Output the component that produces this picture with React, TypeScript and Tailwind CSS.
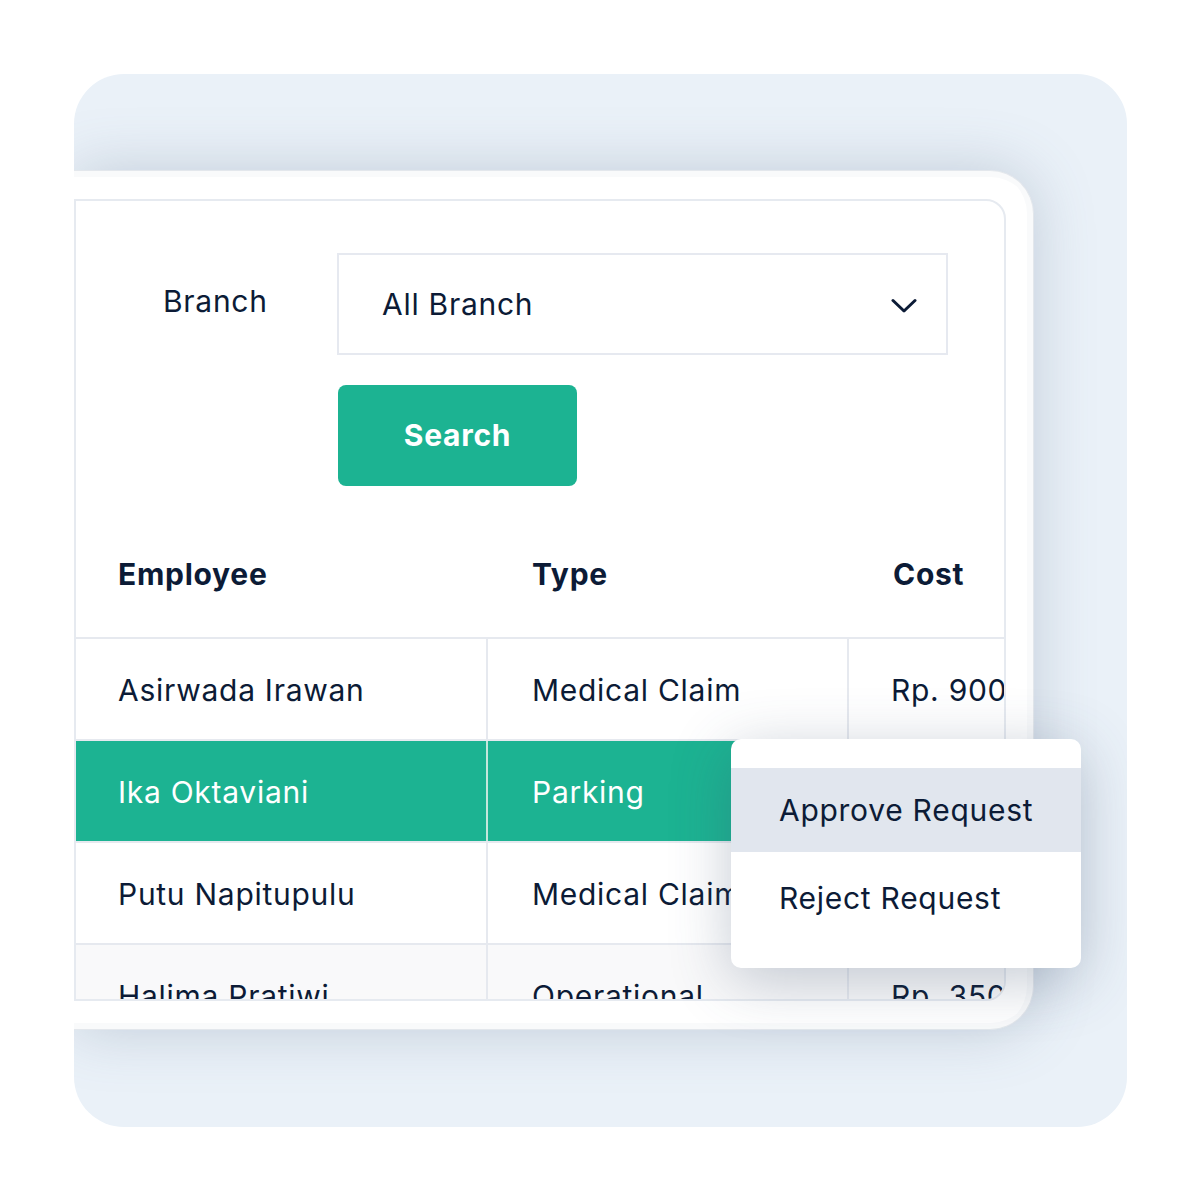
import React from "react";

const rows = [
  { name: "Asirwada Irawan", type: "Medical Claim", cost: "Rp. 900.000", kind: "white" },
  { name: "Ika Oktaviani", type: "Parking", cost: "Rp. 50.000", kind: "green" },
  { name: "Putu Napitupulu", type: "Medical Claim", cost: "Rp. 700.000", kind: "white" },
  { name: "Halima Pratiwi", type: "Operational", cost: "Rp. 350.000", kind: "grey" },
];

export default function App() {
  return (
    <div className="w-[1201px] h-[1201px] bg-white p-[74px] font-['Inter','Noto_Sans',sans-serif] text-[#0c1b36] tracking-[0.045em]">
      <div className="relative w-[1053px] h-[1053px] rounded-[50px] bg-[#eaf1f8] overflow-hidden pt-[96px]">
        <div className="w-[960px] h-[860px] bg-white rounded-r-[44px] border border-l-0 border-[#e3e7ec] shadow-[0_0_60px_rgba(90,110,140,0.28),inset_0_6px_0_#f9fafb,inset_-6px_0_0_#f9fafb,inset_0_-6px_0_#f9fafb] pt-[28px] pb-[28px] pr-[27px]">
          <div className="w-full h-full border-2 border-[#e6eaf0] rounded-r-[20px] overflow-hidden flex flex-col bg-white">
            <div className="shrink-0 flex items-center pl-[87px] pt-[52px]">
              <div className="w-[174px] text-[30px] leading-none mb-[6px]">Branch</div>
              <div className="w-[611px] h-[102px] border-2 border-[#e6e9f0] flex items-center justify-between pl-[43px] pr-[29px]">
                <span className="text-[30px] leading-none">All Branch</span>
                <svg width="26" height="16" viewBox="0 0 26 16" className="mt-[3px]">
                  <polyline points="2,2.5 13,13 24,2.5" fill="none" stroke="#0c1b36" strokeWidth="3" strokeLinecap="round" strokeLinejoin="round" />
                </svg>
              </div>
            </div>
            <div className="shrink-0 pl-[262px] pt-[30px]">
              <div className="w-[239px] h-[101px] rounded-[8px] bg-[#1cb392] flex items-center justify-center text-white font-bold text-[30px]">
                Search
              </div>
            </div>
            <div className="shrink-0 mt-[26px] h-[127px] border-b-2 border-[#e6e9ef] flex items-center font-bold text-[30px]">
              <div className="w-[412px] pl-[42px]">Employee</div>
              <div className="w-[361px] pl-[44px]">Type</div>
              <div className="flex-1 pl-[44px]">Cost</div>
            </div>
            {rows.map((r) => {
              const green = r.kind === "green";
              const bg = green ? "bg-[#1cb392] text-white" : r.kind === "grey" ? "bg-[#f9f9fa]" : "bg-white";
              const divider = green ? "border-[#c4e6dc]" : "border-[#e6e9ef]";
              return (
                <div key={r.name} className={`h-[102px] shrink-0 flex border-b-2 border-[#e6e9ef] text-[30px] ${bg}`}>
                  <div className={`w-[412px] shrink-0 border-r-2 ${divider} pl-[42px] pt-[2px] flex items-center whitespace-nowrap`}>{r.name}</div>
                  <div className={`w-[361px] shrink-0 border-r-2 ${divider} pl-[44px] pt-[2px] flex items-center whitespace-nowrap`}>{r.type}</div>
                  <div className="flex-1 min-w-0 pl-[42px] pt-[2px] flex items-center whitespace-nowrap overflow-hidden">{r.cost}</div>
                </div>
              );
            })}
          </div>
        </div>
        <div className="absolute left-[657px] top-[665px] w-[350px] h-[229px] bg-white rounded-[10px] shadow-[0_12px_60px_rgba(60,80,110,0.3)] pt-[29px]">
          <div className="h-[84px] bg-[#e1e6ee] flex items-center pl-[48px] text-[30px]">Approve Request</div>
          <div className="h-[92px] flex items-center pl-[48px] text-[30px]">Reject Request</div>
        </div>
      </div>
    </div>
  );
}
